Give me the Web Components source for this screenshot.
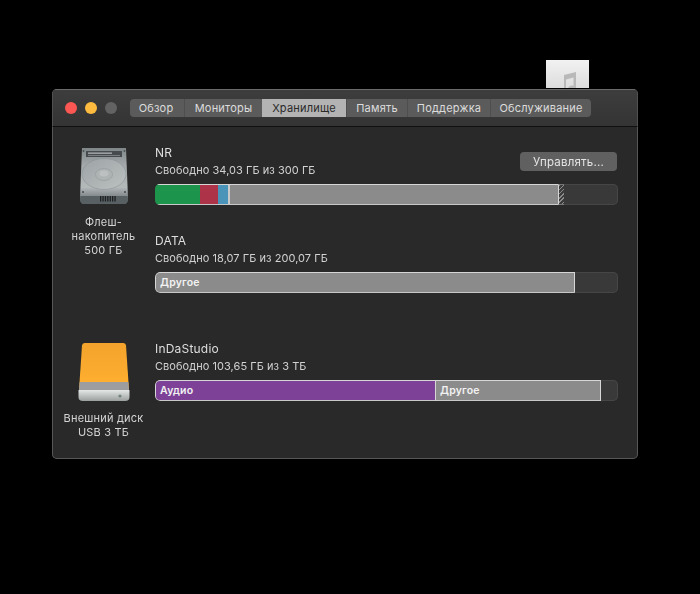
<!DOCTYPE html>
<html lang="ru">
<head>
<meta charset="utf-8">
<title>Об этом Mac</title>
<style>
  html, body { margin: 0; height: 100%; background: #000; }
  body { padding: 89px 62px 0 52px; box-sizing: border-box; font-family: Inter, "Liberation Sans", sans-serif; color: #d8d8d8; }
</style>
</head>
<body>
<music-doc></music-doc>
<about-window>
  <tab-item slot="tabs" w="54">Обзор</tab-item>
  <tab-item slot="tabs" w="78">Мониторы</tab-item>
  <tab-item slot="tabs" w="84" selected>Хранилище</tab-item>
  <tab-item slot="tabs" w="61">Память</tab-item>
  <tab-item slot="tabs" w="83">Поддержка</tab-item>
  <tab-item slot="tabs" w="101">Обслуживание</tab-item>

  <drive-group>
    <hdd-icon slot="icon"></hdd-icon>
    <span slot="caption">Флеш-<br>накопитель<br>500 ГБ</span>
    <volume-row name="NR" free="Свободно 34,03 ГБ из 300 ГБ">
      <manage-button slot="action">Управлять...</manage-button>
      <bar-seg w="45" color="#1d944b"></bar-seg>
      <bar-seg w="18" color="#ad3349"></bar-seg>
      <bar-seg w="10" color="#4a93b9"></bar-seg>
      <bar-seg w="2" color="#c9c9c9"></bar-seg>
      <bar-seg w="328" color="#8b8b8b"></bar-seg>
      <bar-seg w="6" hatch></bar-seg>
    </volume-row>
    <volume-row name="DATA" free="Свободно 18,07 ГБ из 200,07 ГБ">
      <bar-seg w="420" color="#8b8b8b">Другое</bar-seg>
    </volume-row>
  </drive-group>

  <drive-group>
    <usb-icon slot="icon"></usb-icon>
    <span slot="caption">Внешний диск<br>USB 3 ТБ</span>
    <volume-row name="InDaStudio" free="Свободно 103,65 ГБ из 3 ТБ">
      <bar-seg w="280" color="#7d4298">Аудио</bar-seg>
      <bar-seg w="166" color="#8b8b8b" edge>Другое</bar-seg>
    </volume-row>
  </drive-group>
</about-window>

<script>
// Window chrome: traffic lights, tab strip, content area
class AboutWindow extends HTMLElement {
  constructor() {
    super();
    this.attachShadow({ mode: 'open' }).innerHTML = `
      <style>
        :host {
          display: block;
          position: relative;
          width: 586px;
          height: 370px;
          box-sizing: border-box;
          background: #292929;
          border-radius: 5px;
          box-shadow: inset 0 0 0 1px #575757;
          overflow: hidden;
          filter: blur(0.3px);
        }
        .titlebar {
          height: 38px;
          box-sizing: border-box;
          display: flex;
          align-items: flex-start;
          padding: 9px 0 0 12px;
          background: linear-gradient(#3d3d3d, #343434);
          border-top: 1px solid #6a6a6a;
          border-left: 1px solid #505050;
          border-right: 1px solid #505050;
          border-bottom: 1px solid #101010;
        }
        .lights { display: flex; gap: 8px; width: 65px; padding-top: 3px; }
        .lights i { width: 12px; height: 12px; border-radius: 50%; }
        .tabs {
          display: flex;
          height: 18px;
          border-radius: 4px;
          overflow: hidden;
          background: #5b5b5b;
        }
        .content { padding: 18px 20px 0 0; }
      </style>
      <div class="titlebar">
        <div class="lights">
          <i style="background:#fc5753"></i>
          <i style="background:#fdbc40"></i>
          <i style="background:#636363"></i>
        </div>
        <div class="tabs"><slot name="tabs"></slot></div>
      </div>
      <div class="content"><slot></slot></div>
    `;
  }
}

class TabItem extends HTMLElement {
  constructor() {
    super();
    this.attachShadow({ mode: 'open' }).innerHTML = `
      <style>
        :host {
          display: flex;
          align-items: center;
          justify-content: center;
          box-sizing: border-box;
          height: 18px;
          font-size: 11px;
          letter-spacing: 0.2px;
          color: #dcdcdc;
          border-left: 1px solid #4e4e4e;
        }
        :host(:first-child) { border-left: 0; padding-right: 2px; }
        :host([selected]) { background: #b3b3b3; color: #2a2a2a; border-left: 0; }
      </style>
      <slot></slot>
    `;
  }
  connectedCallback() {
    this.style.width = this.getAttribute('w') + 'px';
  }
}

class DriveGroup extends HTMLElement {
  constructor() {
    super();
    this.attachShadow({ mode: 'open' }).innerHTML = `
      <style>
        :host {
          display: grid;
          grid-template-columns: 103px 1fr;
          margin-bottom: 48px;
        }
        .side {
          display: flex;
          flex-direction: column;
          align-items: center;
          padding-top: 2px;
        }
        .caption {
          font-size: 11px;
          line-height: 14px;
          letter-spacing: 0.2px;
          text-align: center;
          color: #d4d4d4;
          margin-top: 10px;
        }
        .vols { display: flex; flex-direction: column; gap: 28px; }
      </style>
      <div class="side">
        <slot name="icon"></slot>
        <div class="caption"><slot name="caption"></slot></div>
      </div>
      <div class="vols"><slot></slot></div>
    `;
  }
}

// One volume: name, free space line, usage bar with its segments in the slot
class VolumeRow extends HTMLElement {
  constructor() {
    super();
    this.attachShadow({ mode: 'open' }).innerHTML = `
      <style>
        :host { display: block; position: relative; }
        .name { font-size: 12px; line-height: 16px; letter-spacing: 0.2px; color: #dedede; }
        .free { font-size: 11px; line-height: 16px; letter-spacing: 0.05px; color: #d2d2d2; margin-top: 1px; }
        .head { display: flex; justify-content: space-between; align-items: flex-start; }
        .bar {
          display: flex;
          height: 21px;
          margin-top: 6px;
          box-sizing: border-box;
          background: #393939;
          box-shadow: inset 0 0 0 1px #464646;
          border-radius: 5px;
          overflow: hidden;
        }
      </style>
      <div class="head">
        <div>
          <div class="name"></div>
          <div class="free"></div>
        </div>
        <slot name="action"></slot>
      </div>
      <div class="bar"><slot></slot></div>
    `;
  }
  connectedCallback() {
    this.shadowRoot.querySelector('.name').textContent = this.getAttribute('name');
    this.shadowRoot.querySelector('.free').textContent = this.getAttribute('free');
  }
}

class BarSeg extends HTMLElement {
  constructor() {
    super();
    this.attachShadow({ mode: 'open' }).innerHTML = `
      <style>
        :host {
          display: flex;
          align-items: center;
          flex: none;
          box-sizing: border-box;
          height: 21px;
          font-size: 10.5px;
          font-weight: 600;
          letter-spacing: 0.2px;
          color: #f2f2f2;
          border-top: 1px solid #d6d6d6;
          border-bottom: 1px solid #c8c8c8;
        }
        :host(:not(:empty)) { padding-left: 4px; }
        :host(:first-child) { border-left: 1px solid #d6d6d6; border-radius: 5px 0 0 5px; }
        :host(:last-child) { border-right: 1px solid #d6d6d6; }
        :host([edge]) { border-left: 1px solid #d6d6d6; }
        :host([hatch]) {
          border-right: 0;
          border-left: 1px solid #d6d6d6;
          border-top-color: #777;
          border-bottom-color: #777;
          background: repeating-linear-gradient(135deg, #8b8b8b 0 1px, #3c3c3c 1px 3px);
        }
      </style>
      <slot></slot>
    `;
  }
  connectedCallback() {
    this.style.width = this.getAttribute('w') + 'px';
    if (this.hasAttribute('color')) this.style.background = this.getAttribute('color');
  }
}

class ManageButton extends HTMLElement {
  constructor() {
    super();
    this.attachShadow({ mode: 'open' }).innerHTML = `
      <style>
        :host {
          display: flex;
          align-items: center;
          justify-content: center;
          width: 97px;
          height: 19px;
          margin: 7px 1px 0 0;
          border-radius: 4px;
          background: #606060;
          font-size: 11.5px;
          letter-spacing: 0.2px;
          color: #e4e4e4;
        }
      </style>
      <slot></slot>
    `;
  }
}

class HddIcon extends HTMLElement {
  constructor() {
    super();
    this.attachShadow({ mode: 'open' }).innerHTML = `
      <style>:host { display: block; width: 50px; height: 58px; } svg { display: block; }</style>
      <svg width="50" height="58" viewBox="0 0 50 58">
        <defs>
          <linearGradient id="b" x1="0" y1="0" x2="0" y2="1">
            <stop offset="0" stop-color="#7f8688"/>
            <stop offset=".3" stop-color="#a3a9aa"/>
            <stop offset=".7" stop-color="#b4b9ba"/>
            <stop offset=".85" stop-color="#868d8f"/>
            <stop offset="1" stop-color="#595f61"/>
          </linearGradient>
          <linearGradient id="p" x1="0" y1="0" x2="1" y2="1">
            <stop offset="0" stop-color="#9da3a5"/>
            <stop offset="1" stop-color="#bcc1c1"/>
          </linearGradient>
        </defs>
        <path d="M3 1h44l2 50q0 6-4 6H5q-4 0-4-6z" fill="url(#b)"/>
        <rect x="7" y="4" width="36" height="6" fill="#464b4d"/>
        <rect x="9" y="5.500" width="24" height="1.300" fill="#b0b4b5"/>
        <rect x="9" y="8" width="32" height="1" fill="#7b7f80"/>
        <ellipse cx="25" cy="27" rx="22" ry="15.500" fill="url(#p)" stroke="#878e90" stroke-width=".5"/>
        <ellipse cx="25" cy="27.500" rx="8.500" ry="6" fill="#aeb3b4" stroke="#929899" stroke-width=".6"/>
        <ellipse cx="25" cy="26.500" rx="4.500" ry="3" fill="#bcc0c1"/>
        <g fill="#4b5052">
          <circle cx="4.500" cy="4" r=".9"/><circle cx="45.500" cy="4" r=".9"/>
          <circle cx="4" cy="45" r="1.100"/><circle cx="46" cy="45" r="1.100"/>
        </g>
        <path d="M1.500 49h47l.5 2q0 6-4 6H5q-4 0-4-6z" fill="#596063"/>
        <g fill="#1d2021">
          <rect x="21" y="49" width="1.300" height="5.500"/><rect x="23.400" y="49" width="1.300" height="5.500"/>
          <rect x="25.800" y="49" width="1.300" height="5.500"/><rect x="28.200" y="49" width="1.300" height="5.500"/>
          <rect x="30.600" y="49" width="1.300" height="5.500"/><rect x="33" y="49" width="1.300" height="5.500"/>
          <rect x="35.400" y="49" width="1.300" height="5.500"/>
        </g>
      </svg>
    `;
  }
}

class UsbIcon extends HTMLElement {
  constructor() {
    super();
    this.attachShadow({ mode: 'open' }).innerHTML = `
      <style>:host { display: block; width: 52px; height: 58px; } svg { display: block; }</style>
      <svg width="52" height="58" viewBox="0 0 52 58">
        <defs>
          <linearGradient id="o" x1="0" y1="0" x2="0" y2="1">
            <stop offset="0" stop-color="#f4a32c"/>
            <stop offset="1" stop-color="#ffb130"/>
          </linearGradient>
          <linearGradient id="s" x1="0" y1="0" x2="0" y2="1">
            <stop offset="0" stop-color="#e4e7e6"/>
            <stop offset="1" stop-color="#9aa09f"/>
          </linearGradient>
        </defs>
        <path d="M4 2.500Q4.200 0 6.500 0h39q2.300 0 2.500 2.500L51 47H1z" fill="url(#o)"/>
        <path d="M1.600 39h48.800l.6 8H1z" fill="#9d9d9f"/>
        <path d="M0.500 47h51v7q0 4-4 4h-43q-4 0-4-4z" fill="url(#s)"/>
        <circle cx="42" cy="53" r="1.600" fill="#74837b"/>
      </svg>
    `;
  }
}

// Document thumbnail sticking out above the window
class MusicDoc extends HTMLElement {
  constructor() {
    super();
    this.attachShadow({ mode: 'open' }).innerHTML = `
      <style>
        :host {
          position: absolute;
          left: 546px;
          top: 60px;
          width: 43px;
          height: 28px;
          overflow: hidden;
          background: linear-gradient(#f2f2f2, #dcdcdc);
          filter: blur(0.4px);
        }
        svg { position: absolute; left: 15px; top: 11px; }
      </style>
      <svg width="16" height="24" viewBox="0 0 16 24">
        <path d="M3 4l12-3v17a4 3.500 0 1 1-2.500-3.200V6.500L5 8.400V21a4 3.500 0 1 1-2-3.200z" fill="#b9b9b9"/>
      </svg>
    `;
  }
}

customElements.define('about-window', AboutWindow);
customElements.define('tab-item', TabItem);
customElements.define('drive-group', DriveGroup);
customElements.define('volume-row', VolumeRow);
customElements.define('bar-seg', BarSeg);
customElements.define('manage-button', ManageButton);
customElements.define('hdd-icon', HddIcon);
customElements.define('usb-icon', UsbIcon);
customElements.define('music-doc', MusicDoc);
</script>
</body>
</html>
